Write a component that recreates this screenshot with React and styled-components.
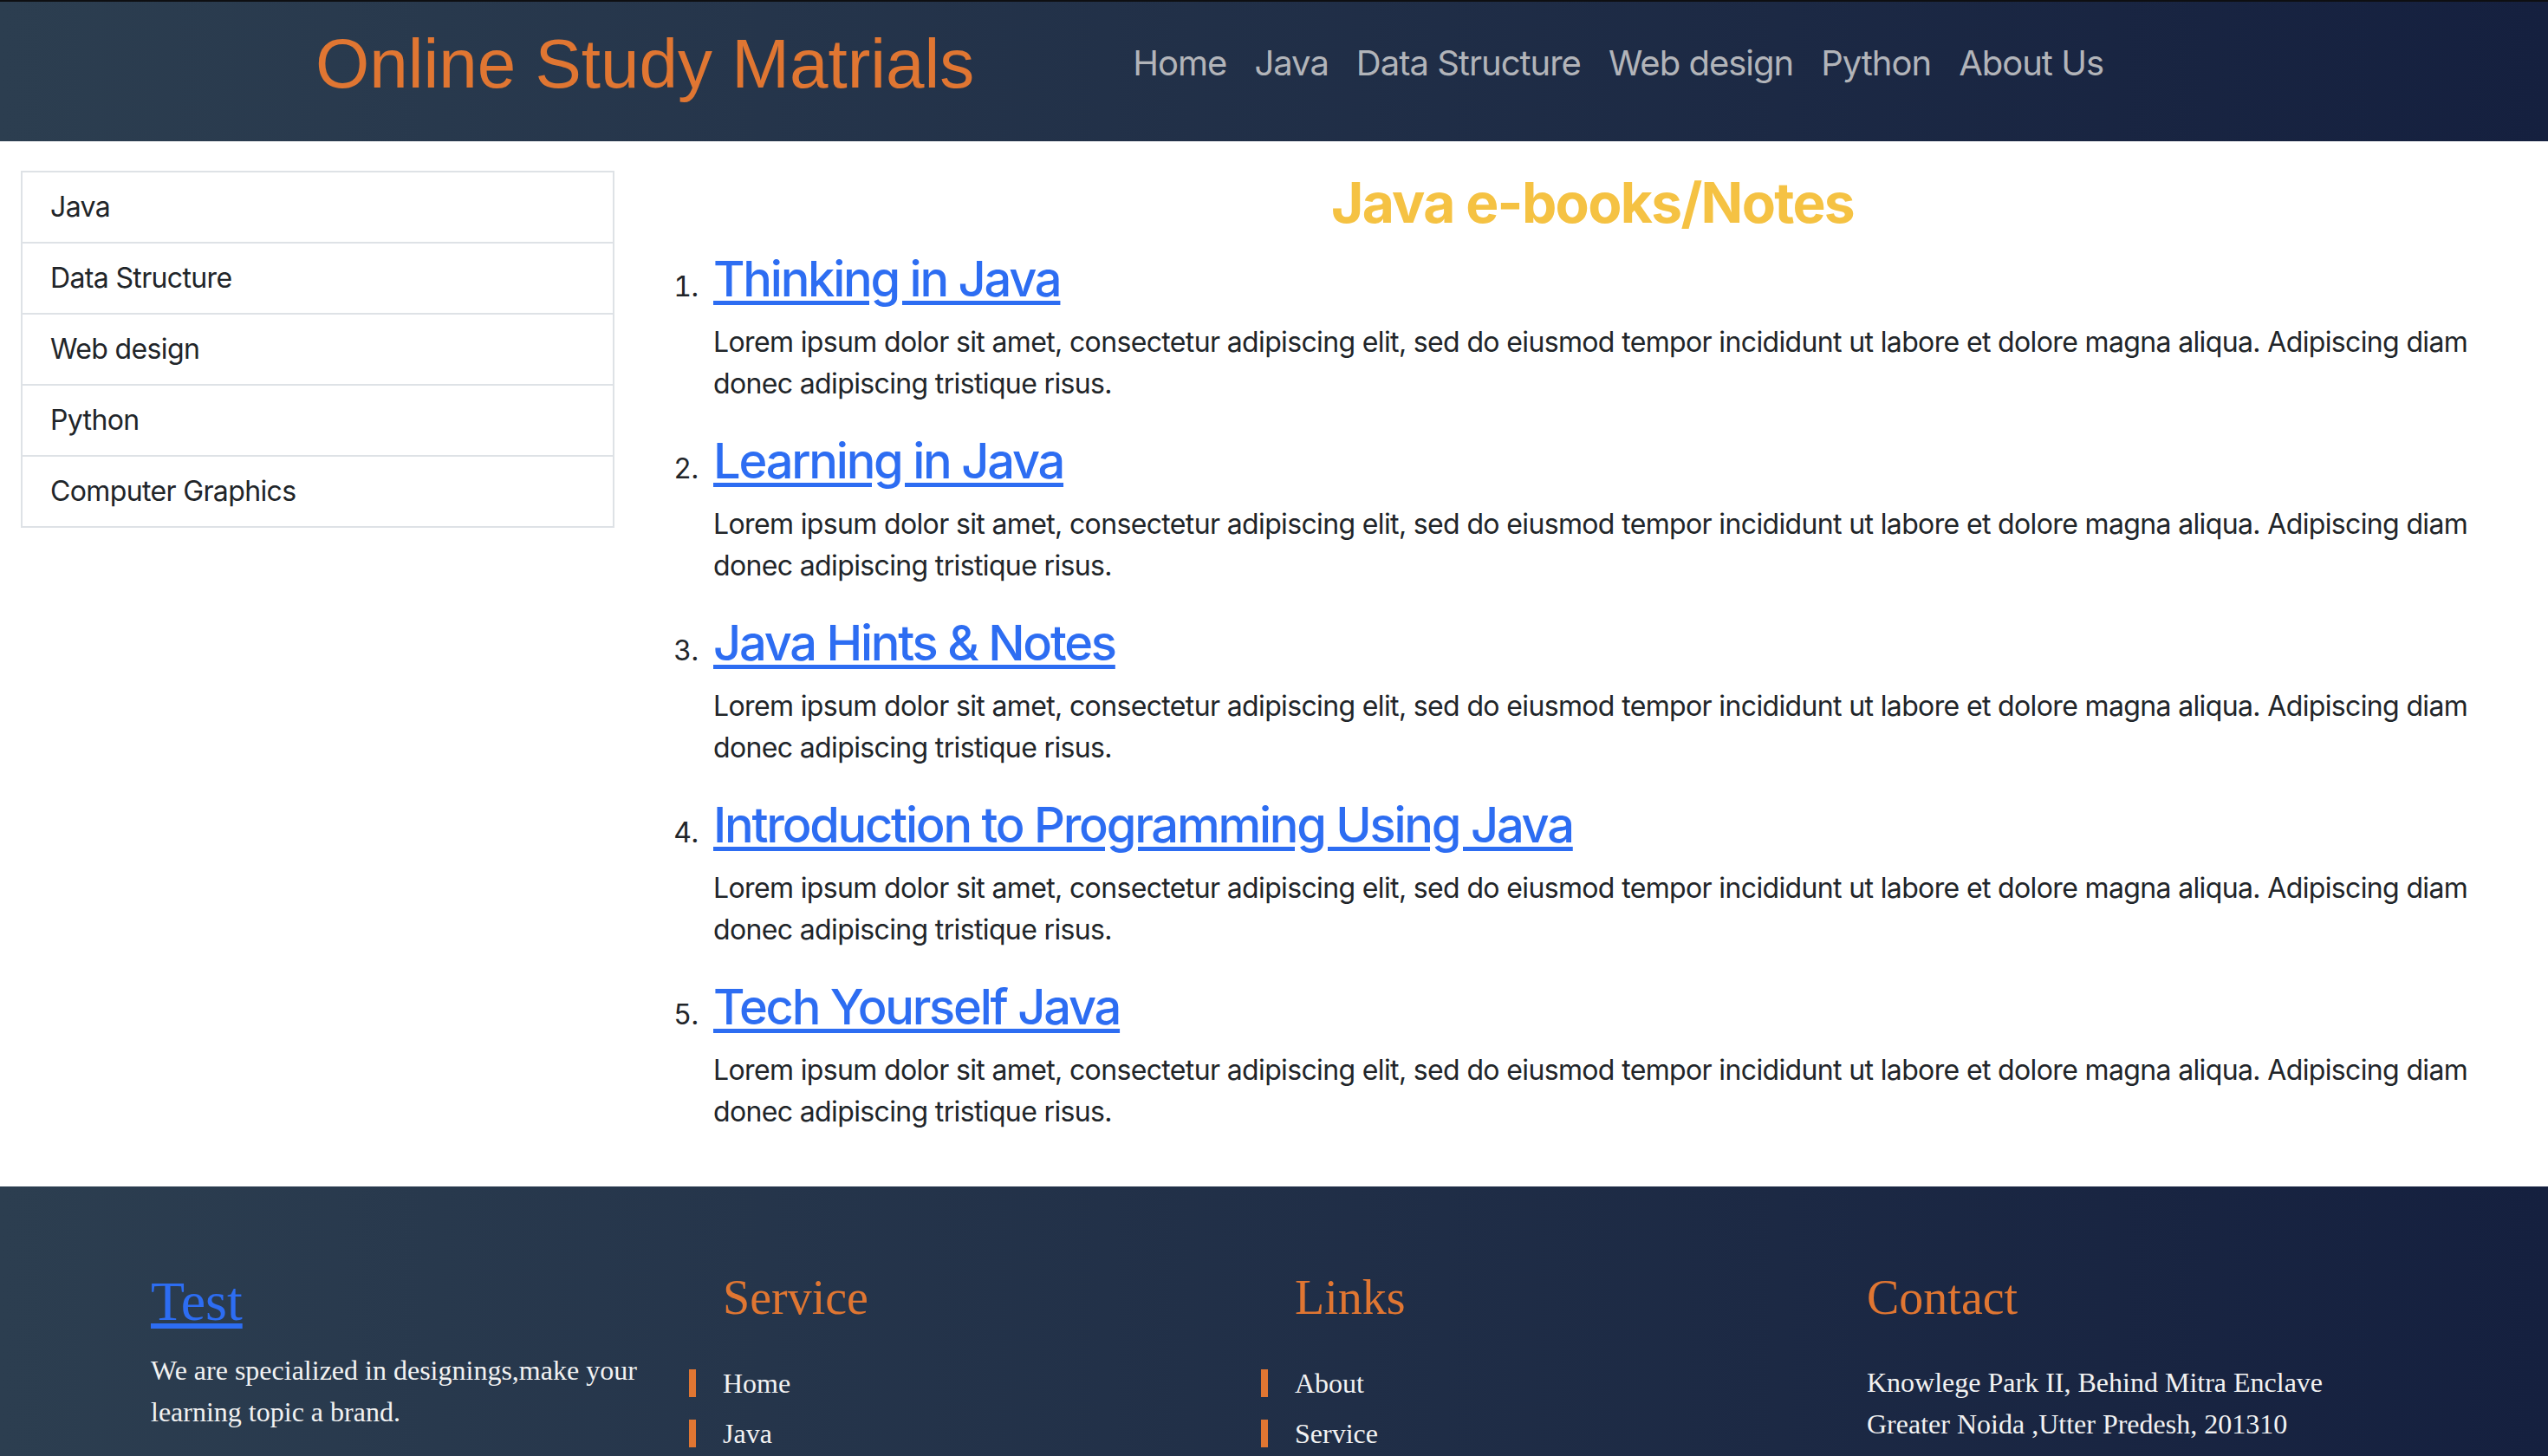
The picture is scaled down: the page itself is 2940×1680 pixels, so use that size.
import React from "react";
import styled, { createGlobalStyle } from "styled-components";

const GlobalStyle = createGlobalStyle`
  *, *::before, *::after { box-sizing: border-box; }
  html, body { margin: 0; padding: 0; background: #fff; }
  body {
    font-family: Inter, "Noto Sans", "Liberation Sans", sans-serif;
    color: #212529;
    font-size: 32px;
    line-height: 1.5;
    letter-spacing: -0.02em;
  }
`;

const gradient = `linear-gradient(to right, #2c3e50 0%, #15203f 100%)`;

const Header = styled.header`
  height: 163px;
  border-top: 2px solid #0e0f12;
  background: ${gradient};
  display: flex;
  align-items: flex-start;
  padding: 24px 0 0 364px;
`;

const Brand = styled.h1`
  margin: 0;
  font-family: "Liberation Sans", Arial, sans-serif;
  font-weight: 400;
  font-size: 80px;
  line-height: 1.2;
  letter-spacing: 0;
  color: #e07632;
  white-space: nowrap;
`;

const Nav = styled.nav`
  display: flex;
  margin: 17px 0 0 167px;
`;

const NavLink = styled.a`
  display: block;
  padding: 0 16px;
  font-size: 40px;
  line-height: 60px;
  letter-spacing: -0.025em;
  color: #b2b4b9;
  text-decoration: none;
  white-space: nowrap;
`;

const Main = styled.main`
  display: flex;
  align-items: flex-start;
  gap: 50px;
  padding: 34px 24px 30px;
`;

const SideList = styled.ul`
  flex: 0 0 685px;
  margin: 0;
  padding: 0;
  list-style: none;
  border: 2px solid #dee2e6;
`;

const SideItem = styled.li`
  padding: 16px 32px;
  font-size: 32px;
  line-height: 48px;
  color: #212529;
  & + & { border-top: 2px solid #dee2e6; }
`;

const Content = styled.section`
  flex: 1;
  min-width: 0;
`;

const PageTitle = styled.h2`
  margin: -1px 0 16px;
  text-align: center;
  font-size: 64px;
  line-height: 1.2;
  font-weight: 700;
  letter-spacing: -0.026em;
  color: #f5c243;
`;

const BookList = styled.ol`
  margin: 0;
  padding-left: 64px;
  li::marker {
    content: counter(list-item) ".\\2002\\200A";
    font-size: 32px;
    color: #212529;
  }
`;

const Book = styled.li`
  font-size: 32px;
`;

const BookTitle = styled.h3`
  margin: 0 0 16px;
  font-size: 56px;
  line-height: 66px;
  font-weight: 500;
  letter-spacing: -0.04em;
  a {
    color: #2d6df2;
    text-decoration: underline;
    text-underline-offset: 5px;
  }
`;

const BookText = styled.p`
  margin: 0 0 32px;
  font-size: 32px;
  line-height: 48px;
  color: #212529;
`;

const Footer = styled.footer`
  background: ${gradient};
  padding: 95px 0 80px;
  font-family: "Liberation Serif", "Times New Roman", serif;
  letter-spacing: 0;
`;

const FooterRow = styled.div`
  width: 2640px;
  margin: 0 auto;
  display: grid;
  grid-template-columns: repeat(4, 1fr);
`;

const FooterCol = styled.div`
  padding: 0 24px;
`;

const FooterBrand = styled.h2`
  margin: 0 0 16px;
  font-size: 64px;
  line-height: 1.2;
  font-weight: 400;
  a { color: #2d6df2; text-decoration: underline; }
`;

const FooterHeading = styled.h3`
  margin: 0;
  font-size: 56px;
  line-height: 1.2;
  font-weight: 400;
  color: #e07632;
`;

const FooterText = styled.p`
  margin: ${(p) => p.$top || 0}px 0 0;
  font-size: 32px;
  line-height: 48px;
  color: #f2f2f2;
`;

const FooterLinks = styled.ul`
  list-style: none;
  margin: 49px 0 0 -39px;
  padding: 0;
`;

const FooterLink = styled.li`
  border-left: 8px solid #e07632;
  padding-left: 31px;
  height: 32px;
  line-height: 32px;
  margin-bottom: 26px;
  font-size: 32px;
  color: #f2f2f2;
`;

const navItems = ["Home", "Java", "Data Structure", "Web design", "Python", "About Us"];
const sideItems = ["Java", "Data Structure", "Web design", "Python", "Computer Graphics"];
const books = [
  "Thinking in Java",
  "Learning in Java",
  "Java Hints & Notes",
  "Introduction to Programming Using Java",
  "Tech Yourself Java",
];
const lorem =
  "Lorem ipsum dolor sit amet, consectetur adipiscing elit, sed do eiusmod tempor incididunt ut labore et dolore magna aliqua. Adipiscing diam donec adipiscing tristique risus.";

export default function App() {
  return (
    <>
      <GlobalStyle />
      <Header>
        <Brand>Online Study Matrials</Brand>
        <Nav>
          {navItems.map((n) => (
            <NavLink key={n} href="#">{n}</NavLink>
          ))}
        </Nav>
      </Header>
      <Main>
        <SideList>
          {sideItems.map((s) => (
            <SideItem key={s}>{s}</SideItem>
          ))}
        </SideList>
        <Content>
          <PageTitle>Java e-books/Notes</PageTitle>
          <BookList>
            {books.map((b) => (
              <Book key={b}>
                <BookTitle><a href="#">{b}</a></BookTitle>
                <BookText>{lorem}</BookText>
              </Book>
            ))}
          </BookList>
        </Content>
      </Main>
      <Footer>
        <FooterRow>
          <FooterCol>
            <FooterBrand><a href="#">Test</a></FooterBrand>
            <FooterText>We are specialized in designings,make your learning topic a brand.</FooterText>
          </FooterCol>
          <FooterCol>
            <FooterHeading>Service</FooterHeading>
            <FooterLinks>
              {["Home", "Java"].map((l) => (
                <FooterLink key={l}>{l}</FooterLink>
              ))}
            </FooterLinks>
          </FooterCol>
          <FooterCol>
            <FooterHeading>Links</FooterHeading>
            <FooterLinks>
              {["About", "Service"].map((l) => (
                <FooterLink key={l}>{l}</FooterLink>
              ))}
            </FooterLinks>
          </FooterCol>
          <FooterCol>
            <FooterHeading>Contact</FooterHeading>
            <FooterText $top={40}>
              Knowlege Park II, Behind Mitra Enclave
              <br />
              Greater Noida ,Utter Predesh, 201310
            </FooterText>
          </FooterCol>
        </FooterRow>
      </Footer>
    </>
  );
}
